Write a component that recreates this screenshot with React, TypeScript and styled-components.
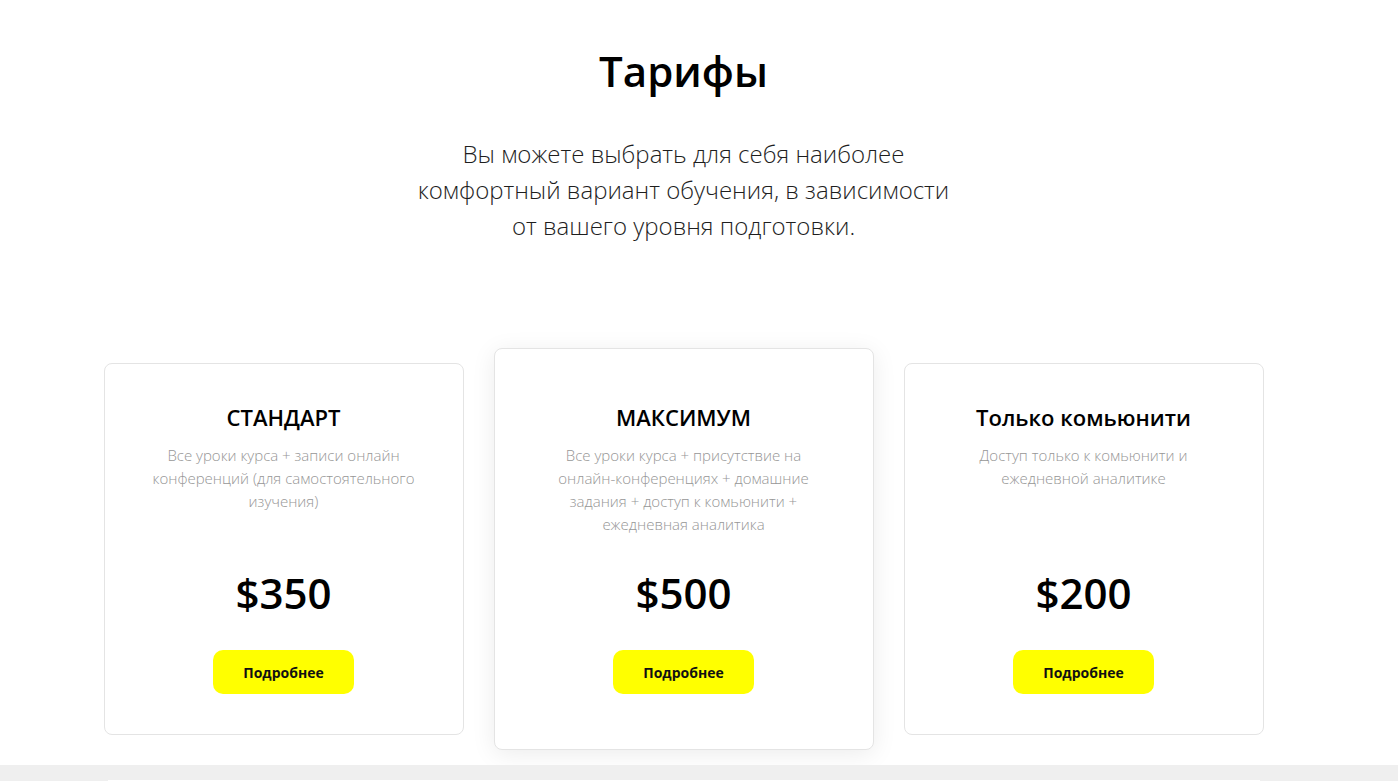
import React from "react";
import styled, { createGlobalStyle } from "styled-components";

const GlobalStyle = createGlobalStyle`
  html, body {
    margin: 0;
    padding: 0;
    background: #ffffff;
    font-family: "Open Sans", "Noto Sans", sans-serif;
    color: #000;
  }
  * { box-sizing: border-box; }
`;

const Page = styled.div`
  width: 100%;
  height: 781px;
  overflow: hidden;
  display: flex;
  flex-direction: column;
`;

const Section = styled.section`
  width: 1367px;
  display: flex;
  flex-direction: column;
  align-items: center;
  padding-top: 43px;
`;

const Heading = styled.h1`
  margin: 0;
  font-size: 42px;
  line-height: 56px;
  font-weight: 600;
  color: #000;
`;

const Lead = styled.p`
  margin: 37px 0 0;
  max-width: 560px;
  text-align: center;
  font-size: 24px;
  line-height: 36px;
  font-weight: 300;
  color: #1e1e1e;
`;

const Cards = styled.div`
  margin-top: 104px;
  display: flex;
  align-items: center;
  gap: 40px;
`;

const Card = styled.div<{ $featured?: boolean }>`
  width: ${(p) => (p.$featured ? "380px" : "360px")};
  height: ${(p) => (p.$featured ? "402px" : "372px")};
  margin: ${(p) => (p.$featured ? "0 -10px" : "0")};
  padding: ${(p) => (p.$featured ? "53px 40px 55px" : "38px 30px 40px")};
  background: #fff;
  border: 1px solid #e4e4e4;
  border-radius: 8px;
  box-shadow: ${(p) => (p.$featured ? "0 4px 24px rgba(0,0,0,0.08)" : "none")};
  display: flex;
  flex-direction: column;
  align-items: center;
  text-align: center;
`;

const CardTitle = styled.h3`
  margin: 0;
  font-size: 22px;
  line-height: 30px;
  font-weight: 600;
  color: #000;
`;

const CardText = styled.p`
  margin: 12px 0 0;
  max-width: 275px;
  font-size: 15px;
  line-height: 23px;
  font-weight: 300;
  color: #969696;
  flex: 1;
`;

const Price = styled.div`
  font-size: 42px;
  line-height: 50px;
  font-weight: 600;
  color: #000;
  margin-bottom: 32px;
`;

const Button = styled.button`
  width: 141px;
  height: 44px;
  border: none;
  border-radius: 10px;
  background: #ffff00;
  font-family: "Open Sans", "Noto Sans", sans-serif;
  font-size: 14px;
  font-weight: 700;
  color: #111;
  cursor: pointer;
`;

const FooterBand = styled.div`
  margin-top: auto;
  width: 100%;
  background: #efefef;
  padding-top: 15px;
  height: 16px;
  flex-shrink: 0;
  overflow: hidden;
`;

const FooterInner = styled.div`
  width: 1367px;
  display: flex;
  justify-content: center;
`;

const FooterBox = styled.div`
  width: 1152px;
  height: 20px;
  background: #fff;
`;

const plans = [
  {
    title: "СТАНДАРТ",
    text: "Все уроки курса + записи онлайн конференций (для самостоятельного изучения)",
    price: "$350",
  },
  {
    title: "МАКСИМУМ",
    text: "Все уроки курса + присутствие на онлайн-конференциях + домашние задания + доступ к комьюнити + ежедневная аналитика",
    price: "$500",
    featured: true,
  },
  {
    title: "Только комьюнити",
    text: "Доступ только к комьюнити и ежедневной аналитике",
    price: "$200",
  },
];

export default function App() {
  return (
    <Page>
      <GlobalStyle />
      <Section>
        <Heading>Тарифы</Heading>
        <Lead>
          Вы можете выбрать для себя наиболее комфортный вариант обучения, в
          зависимости от вашего уровня подготовки.
        </Lead>
        <Cards>
          {plans.map((p) => (
            <Card key={p.title} $featured={p.featured}>
              <CardTitle>{p.title}</CardTitle>
              <CardText>{p.text}</CardText>
              <Price>{p.price}</Price>
              <Button>Подробнее</Button>
            </Card>
          ))}
        </Cards>
      </Section>
      <FooterBand>
        <FooterInner>
          <FooterBox />
        </FooterInner>
      </FooterBand>
    </Page>
  );
}
